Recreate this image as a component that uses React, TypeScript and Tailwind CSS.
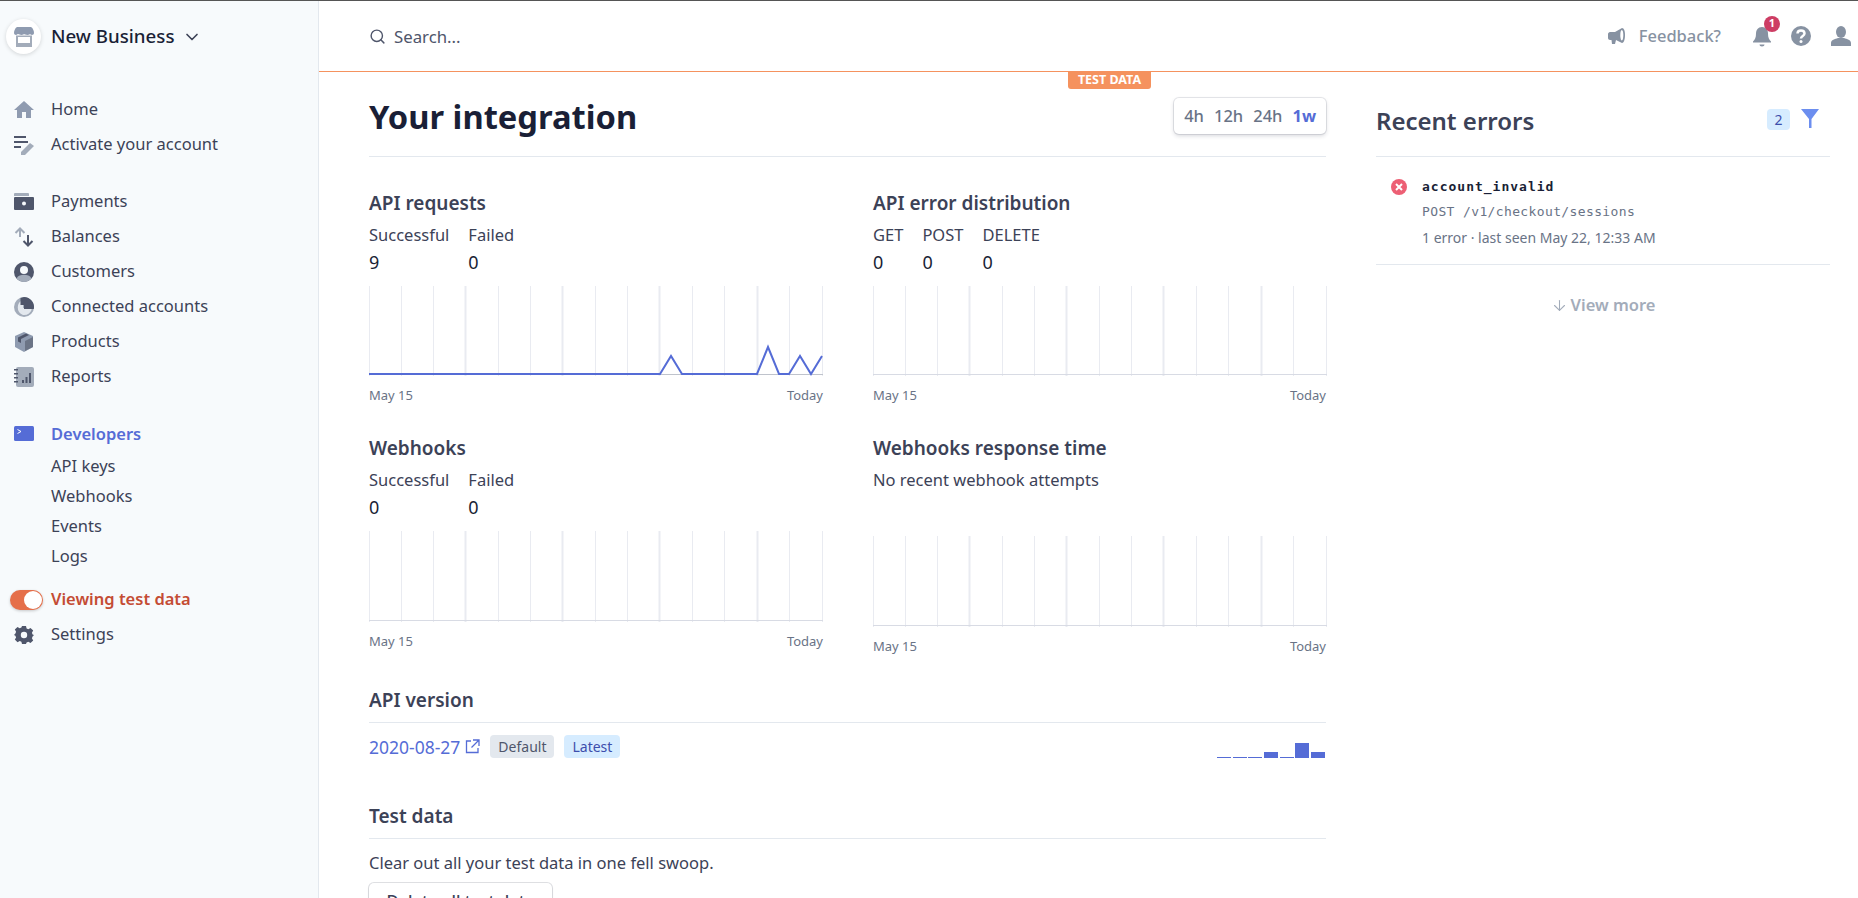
import { ReactNode } from "react";
import { ChevronDown, Search, ArrowDown } from "lucide-react";

const Icon = ({ children, size = 20 }: { children: ReactNode; size?: number }) => (
    <svg width={size} height={size} viewBox="0 0 20 20" className="shrink-0">{children}</svg>
);

const HomeIcon = () => (
    <Icon><path fill="#8f9bb0" d="M10 1 L20 10 L17 10 L17 18 L12 18 L12 12 L8 12 L8 18 L3 18 L3 10 L0 10 Z" /></Icon>
);
const ActivateIcon = () => (
    <Icon>
        <path fill="#4f566b" d="M0 1h12v2H0zM0 6h14v2H0zM0 11h7v2H0z" />
        <path fill="#a3acba" d="M7 17 L16 8 L20 11 L11 20 L7 20 Z" />
    </Icon>
);
const PaymentsIcon = () => (
    <Icon>
        <path fill="#a3acba" d="M1 1h13a1 1 0 0 1 1 1v2H0V2a1 1 0 0 1 1-1z" />
        <path fill="#4f566b" fillRule="evenodd" d="M1 5h18a1 1 0 0 1 1 1v11a1 1 0 0 1-1 1H1a1 1 0 0 1-1-1V6a1 1 0 0 1 1-1zm9 4.500a2 2 0 1 0 0 4 2 2 0 0 0 0-4z" />
    </Icon>
);
const BalancesIcon = () => (
    <Icon>
        <path fill="none" stroke="#a3acba" strokeWidth="2" d="M6 10V2M1.500 6L6 1.500 10.500 6" />
        <path fill="none" stroke="#4f566b" strokeWidth="2" d="M14 8v10M9.500 14L14 18.500 18.500 14" />
    </Icon>
);
const CustomersIcon = () => (
    <Icon>
        <circle cx="10" cy="10" r="10" fill="#4f566b" />
        <path fill="#a3acba" d="M2.500 16.500C4 13.500 7 12.800 10 12.800s6 .7 7.500 3.700A10 10 0 0 1 2.500 16.500z" />
        <circle cx="10" cy="8" r="4" fill="#f7fafc" />
    </Icon>
);
const ConnectedIcon = () => (
    <Icon>
        <circle cx="10" cy="10" r="10" fill="#a3acba" />
        <path fill="#e3e8ee" d="M9 3A8 8 0 0 0 9 18A8 8 0 0 0 18 11H9z" />
        <path fill="#4f566b" d="M10 0a10 10 0 0 1 9.800 12H10V8H6.500V1z" />
    </Icon>
);
const ProductsIcon = () => (
    <Icon>
        <path fill="#8f9bb0" d="M10 0 L19 4 L19 15 L10 20 L1 15 L1 4 Z" />
        <path fill="#6b7486" d="M11 9 L19 5 L19 15 L11 19 Z" />
        <path fill="#4f566b" d="M4 5.500 L12 1.500 L15 3 L7 7 L7 11 L4 9.500 Z" />
    </Icon>
);
const ReportsIcon = () => (
    <Icon>
        <rect x="2" y="0" width="18" height="20" rx="2" fill="#a3acba" />
        <path fill="#4f566b" d="M0 2h4v1.500H0zM0 6h4v1.500H0zM0 10h4v1.500H0zM0 14h4v1.500H0z" />
        <path fill="#4f566b" d="M8 13h2v3H8zM11.500 10h2v6h-2zM15 6h2v10h-2z" />
    </Icon>
);
const DevelopersIcon = () => (
    <Icon>
        <rect x="0" y="1" width="20" height="15" rx="1.500" fill="#556cd6" />
        <path fill="none" stroke="#fff" strokeWidth="1" d="M3.500 4.500 L7 6.500 L3.500 8.500" />
    </Icon>
);
const SettingsIcon = () => (
    <Icon>
        <path fill="#4f566b" fillRule="evenodd" d="M8 1h4l.6 2.500 1.700.7 2.200-1.300 2.700 2.700-1.300 2.200.7 1.700L20 10l-1.400 1.500-.7 1.700 1.300 2.200-2.700 2.700-2.200-1.300-1.700.7L12 19H8l-.6-2.300-1.700-.7-2.200 1.300-2.700-2.700 1.300-2.200-.7-1.700L0 10l1.400-1.500.7-1.700-1.300-2.200 2.700-2.700 2.200 1.300 1.700-.7zM10 6.800a3.200 3.200 0 1 0 0 6.400 3.200 3.200 0 0 0 0-6.400z" />
    </Icon>
);

const NavItem = ({ icon, label }: { icon: ReactNode; label: string }) => (
    <div className="flex h-[35px] items-center">
        <div className="flex w-[51px] justify-center pr-[3px]">{icon}</div>
        <span className="text-[16.500px] text-[#3c4257]">{label}</span>
    </div>
);

const SubItem = ({ label }: { label: string }) => (
    <div className="flex h-[30px] items-center pl-[51px] text-[16.500px] text-[#3c4257]">{label}</div>
);

const Sidebar = () => (
    <aside className="flex w-[319px] shrink-0 flex-col border-r border-[#e3e8ee] bg-[#f7fafc]">
        <div className="flex h-[71px] items-center pl-[6px]">
            <div className="flex h-[35px] w-[35px] items-center justify-center rounded-full bg-white shadow-[0_1px_4px_rgba(0,0,0,0.15)]">
                <svg width="20" height="20" viewBox="0 0 20 20">
                    <path fill="#8f9bb0" d="M3 0h14c2 1 3 4 3 6 0 1-1 2-2 2s-2-1-2-1-1 1-2.500 1S10 7 10 7 9 8 7.500 8 5 7 4 7 3 8 2 8 0 7 0 6c0-2 1-5 3-6z" />
                    <path fill="#a3acba" fillRule="evenodd" d="M2 8.500h16V20H2zM4 10v6h12v-6z" />
                </svg>
            </div>
            <span className="ml-[10px] text-[18.700px] font-medium text-[#1a1f36]">New Business</span>
            <ChevronDown size={20} strokeWidth={2} className="ml-[8px] text-[#3c4257]" />
        </div>
        <div className="mt-[20px]">
            <NavItem icon={<HomeIcon />} label="Home" />
            <NavItem icon={<ActivateIcon />} label="Activate your account" />
        </div>
        <div className="mt-[22px]">
            <NavItem icon={<PaymentsIcon />} label="Payments" />
            <NavItem icon={<BalancesIcon />} label="Balances" />
            <NavItem icon={<CustomersIcon />} label="Customers" />
            <NavItem icon={<ConnectedIcon />} label="Connected accounts" />
            <NavItem icon={<ProductsIcon />} label="Products" />
            <NavItem icon={<ReportsIcon />} label="Reports" />
        </div>
        <div className="mt-[23px] flex h-[35px] items-center">
            <div className="flex w-[51px] justify-center pr-[3px]"><DevelopersIcon /></div>
            <span className="text-[16.500px] font-semibold text-[#556cd6]">Developers</span>
        </div>
        <div className="mt-[-1px]">
            <SubItem label="API keys" />
            <SubItem label="Webhooks" />
            <SubItem label="Events" />
            <SubItem label="Logs" />
        </div>
        <div className="mt-[11px] flex h-[35px] items-center">
            <div className="ml-[10px] flex h-[20px] w-[33px] items-center justify-end rounded-full bg-[#e56f4a] pr-[1px] shadow-[0_1px_3px_rgba(0,0,0,0.2)]">
                <div className="h-[18px] w-[18px] rounded-full bg-white" />
            </div>
            <span className="ml-[8px] text-[16.500px] font-semibold text-[#c44c34]">Viewing test data</span>
        </div>
        <NavItem icon={<SettingsIcon />} label="Settings" />
    </aside>
);

const Header = () => (
    <header className="relative flex h-[71px] shrink-0 items-center border-b border-[#f5925e] pr-[7px] pl-[50px]">
        <Search size={17} strokeWidth={2} className="text-[#4f566b]" />
        <span className="mt-[2px] ml-[8px] text-[16.800px] text-[#4f566b]">Search...</span>
        <div className="ml-auto flex items-center">
            <svg width="20" height="18" viewBox="0 0 20 18" className="text-[#8792a2]">
                <path fill="currentColor" d="M0 7c0-1 1-2 2-2h5l7-4c2 0 3 3 3 7s-1 8-3 8l-6-3-1 4H4l-.5-4H2c-1 0-2-1-2-2z" />
                <path fill="#fff" d="M13.800 3c-1 0-1.500 2.500-1.500 5s.5 5.500 1.500 5.500 1.500-3 1.500-5.500-.5-5-1.500-5z" />
            </svg>
            <span className="mt-[1px] ml-[11px] text-[16.500px] font-medium text-[#8792a2]">Feedback?</span>
            <div className="relative ml-[32px]">
                <svg width="18" height="21" viewBox="0 0 18 21" className="block">
                    <path fill="#8792a2" d="M9 1c4 0 6 3 6 6.500 0 4 1 6 3 8v1H0v-1c2-2 3-4 3-8C3 4 5 1 9 1zM6.500 18.500h5c0 1-1 2-2.500 2s-2.500-1-2.500-2z" />
                </svg>
                <div className="absolute top-[-10px] left-[11px] flex h-[16px] w-[16px] items-center justify-center rounded-full bg-[#cd3d64] text-[11px] font-bold text-white">1</div>
            </div>
            <svg width="20" height="20" viewBox="0 0 20 20" className="ml-[20px]">
                <circle cx="10" cy="10" r="10" fill="#8792a2" />
                <path fill="none" stroke="#fff" strokeWidth="2.500" d="M6.500 7.500C6.500 5.500 8 4.500 10 4.500s3.500 1 3.500 3c0 2.500-3.500 2.500-3.500 5" />
                <circle cx="10" cy="15.500" r="1.500" fill="#fff" />
            </svg>
            <svg width="20" height="20" viewBox="0 0 20 20" className="ml-[20px]">
                <ellipse cx="10" cy="6" rx="5" ry="6" fill="#8792a2" />
                <path fill="#8792a2" d="M0 20v-3c0-3 4-4 7-5h6c3 1 7 2 7 5v3z" />
            </svg>
        </div>
        <div className="absolute top-[70px] left-[749px] z-10 flex h-[18px] w-[83px] items-center justify-center rounded-b-[3px] bg-[#f5925e] text-[12.500px] font-bold text-white">TEST DATA</div>
    </header>
);

const gridX = [0, 32, 64, 96, 129, 161, 193, 226, 258, 290, 323, 355, 388, 420, 453];
const thickX = [96, 193, 290, 388];

const Chart = ({ height = 90, points }: { height?: number; points?: string }) => (
    <svg width="454" height={height} viewBox={`0 0 454 ${height}`} className="block">
        {gridX.map((x) => (
            <line key={x} x1={x + 0.5} x2={x + 0.5} y1="0" y2={height} stroke="#e9ebf1" strokeWidth={thickX.includes(x) ? 2 : 1} />
        ))}
        <line x1="0" x2="454" y1={height - 1.5} y2={height - 1.5} stroke={points ? "#bfc3cc" : "#d8dbe4"} strokeWidth="1" />
        {points && <polyline points={points} fill="none" stroke="#556cd6" strokeWidth="2" />}
    </svg>
);

const ChartAxis = () => (
    <div className="mt-[10px] flex justify-between text-[13px] leading-[18px] text-[#697386]">
        <span>May 15</span>
        <span>Today</span>
    </div>
);

const Stat = ({ label, value }: { label: string; value: string }) => (
    <div>
        <div className="text-[16.500px] leading-[24px] text-[#3c4257]">{label}</div>
        <div className="mt-[2px] text-[18px] leading-[26px] text-[#1a1f36]">{value}</div>
    </div>
);

const Stats = ({ items }: { items: [string, string][] }) => (
    <div className="mt-[8px] flex gap-[19px]">
        {items.map(([l, v]) => <Stat key={l} label={l} value={v} />)}
    </div>
);

const Title = ({ children }: { children: ReactNode }) => (
    <h3 className="text-[19px] leading-[24px] font-semibold text-[#3c4257]">{children}</h3>
);

const Main = () => (
    <main className="box-content w-[957px] shrink-0 pl-[50px]">
        <div className="flex h-[85px] items-start justify-between border-b border-[#e3e8ee] pt-[20px]">
            <h1 className="text-[32.700px] leading-[50px] font-bold text-[#1a1f36]">Your integration</h1>
            <div className="mt-[6px] flex h-[36px] items-center gap-[10px] rounded-[5px] bg-white px-[10px] text-[16.500px] font-medium text-[#697386] shadow-[0_0_0_1px_rgba(60,66,87,0.12),0_2px_4px_rgba(60,66,87,0.2)]">
                <span>4h</span>
                <span>12h</span>
                <span>24h</span>
                <span className="font-bold text-[#556cd6]">1w</span>
            </div>
        </div>
        <div className="mt-[34px] grid grid-cols-[454px_453px] gap-x-[50px]">
            <div>
                <Title>API requests</Title>
                <Stats items={[["Successful", "9"], ["Failed", "0"]]} />
                <div className="mt-[11px]">
                    <Chart points="0,88 291,88 302,70 313,88 388,88 399,61 410,88 420,88 431,70 442,88 453,70" />
                </div>
                <ChartAxis />
            </div>
            <div>
                <Title>API error distribution</Title>
                <Stats items={[["GET", "0"], ["POST", "0"], ["DELETE", "0"]]} />
                <div className="mt-[11px]"><Chart /></div>
                <ChartAxis />
            </div>
            <div className="mt-[32px]">
                <Title>Webhooks</Title>
                <Stats items={[["Successful", "0"], ["Failed", "0"]]} />
                <div className="mt-[11px]"><Chart height={91} /></div>
                <ChartAxis />
            </div>
            <div className="mt-[32px]">
                <Title>Webhooks response time</Title>
                <div className="mt-[8px] text-[16.500px] leading-[24px] text-[#3c4257]">No recent webhook attempts</div>
                <div className="mt-[44px]"><Chart height={91} /></div>
                <ChartAxis />
            </div>
        </div>
        <div className="mt-[33px] border-b border-[#e3e8ee] pb-[10px]"><Title>API version</Title></div>
        <div className="flex h-[49px] items-start pt-[12px]">
            <span className="text-[17.500px] leading-[24px] text-[#556cd6]">2020-08-27</span>
            <svg width="15" height="15" viewBox="0 0 15 15" className="mt-[4px] ml-[5px]" fill="none" stroke="#556cd6" strokeWidth="1.300">
                <path d="M6 2H1.500v11.500H13V9M8 1h6v6M14 1L6.500 8.500" />
            </svg>
            <span className="ml-[10px] rounded-[4px] bg-[#e3e8ee] px-[8px] text-[14px] leading-[23px] text-[#4f566b]">Default</span>
            <span className="ml-[10px] rounded-[4px] bg-[#d6ecff] px-[8px] text-[14px] leading-[23px] text-[#3d4eac]">Latest</span>
            <div className="ml-auto flex h-[23px] items-end gap-[1.670px] pr-[1px]">
                {[1, 1, 1, 6, 1, 15, 6].map((h, i) => (
                    <div key={i} className="w-[14px] bg-[#556cd6]" style={{ height: h }} />
                ))}
            </div>
        </div>
        <div className="mt-[32px] border-b border-[#e3e8ee] pb-[10px]"><Title>Test data</Title></div>
        <div className="mt-[12px] text-[16.500px] leading-[24px] text-[#3c4257]">Clear out all your test data in one fell swoop.</div>
        <div className="mt-[8px] inline-flex h-[36px] w-[183px] items-center justify-center rounded-[5px] bg-white text-[16.500px] font-medium text-[#3c4257] shadow-[0_0_0_1px_rgba(60,66,87,0.16),0_1px_2px_rgba(60,66,87,0.2)]">Delete all test data</div>
    </main>
);

const RightPanel = () => (
    <section className="ml-[50px] w-[454px] shrink-0">
        <div className="flex h-[85px] items-center justify-between border-b border-[#e3e8ee] pt-[14px]">
            <h2 className="text-[24px] font-semibold text-[#3c4257]">Recent errors</h2>
            <div className="mt-[-4px] mr-[11px] flex items-center">
                <span className="flex h-[21px] w-[23px] items-center justify-center rounded-[4px] bg-[#d6ecff] text-[14px] text-[#3d4eac]">2</span>
                <svg width="18" height="20" viewBox="0 0 18 20" className="ml-[11px]">
                    <path fill="#6c8eef" d="M0 0h18L10.500 10v9h-2.500v-9z" />
                </svg>
            </div>
        </div>
        <div className="relative border-b border-[#e3e8ee] pt-[20px] pb-[16px] pl-[46px]">
            <svg width="16" height="16" viewBox="0 0 16 16" className="absolute top-[22px] left-[15px]">
                <circle cx="8" cy="8" r="8" fill="#ed5f74" />
                <path stroke="#fff" strokeWidth="2" d="M5 5l6 6M11 5l-6 6" />
            </svg>
            <div className="font-['DejaVu_Sans_Mono',monospace] text-[13px] leading-[20px] font-bold tracking-[1px] text-[#1a1f36]">account_invalid</div>
            <div className="mt-[5px] font-['DejaVu_Sans_Mono',monospace] text-[13px] leading-[20px] tracking-[0.37px] text-[#697386]">POST /v1/checkout/sessions</div>
            <div className="mt-[6px] text-[14px] leading-[20px] text-[#697386]">1 error · last seen May 22, 12:33 AM</div>
        </div>
        <div className="mt-[28px] flex items-center justify-center text-[16.500px] font-semibold text-[#a3acba]">
            <ArrowDown size={17} strokeWidth={1.500} className="mr-[3px]" />
            View more
        </div>
    </section>
);

export default function App() {
    return (
        <div className="flex h-[898px] w-[1858px] flex-col overflow-hidden bg-white font-['Noto_Sans',sans-serif]">
            <div className="h-px shrink-0 bg-[#555]" />
            <div className="flex h-[897px]">
                <Sidebar />
                <div className="flex min-w-0 flex-1 flex-col">
                    <Header />
                    <div className="flex">
                        <Main />
                        <RightPanel />
                    </div>
                </div>
            </div>
        </div>
    );
}
